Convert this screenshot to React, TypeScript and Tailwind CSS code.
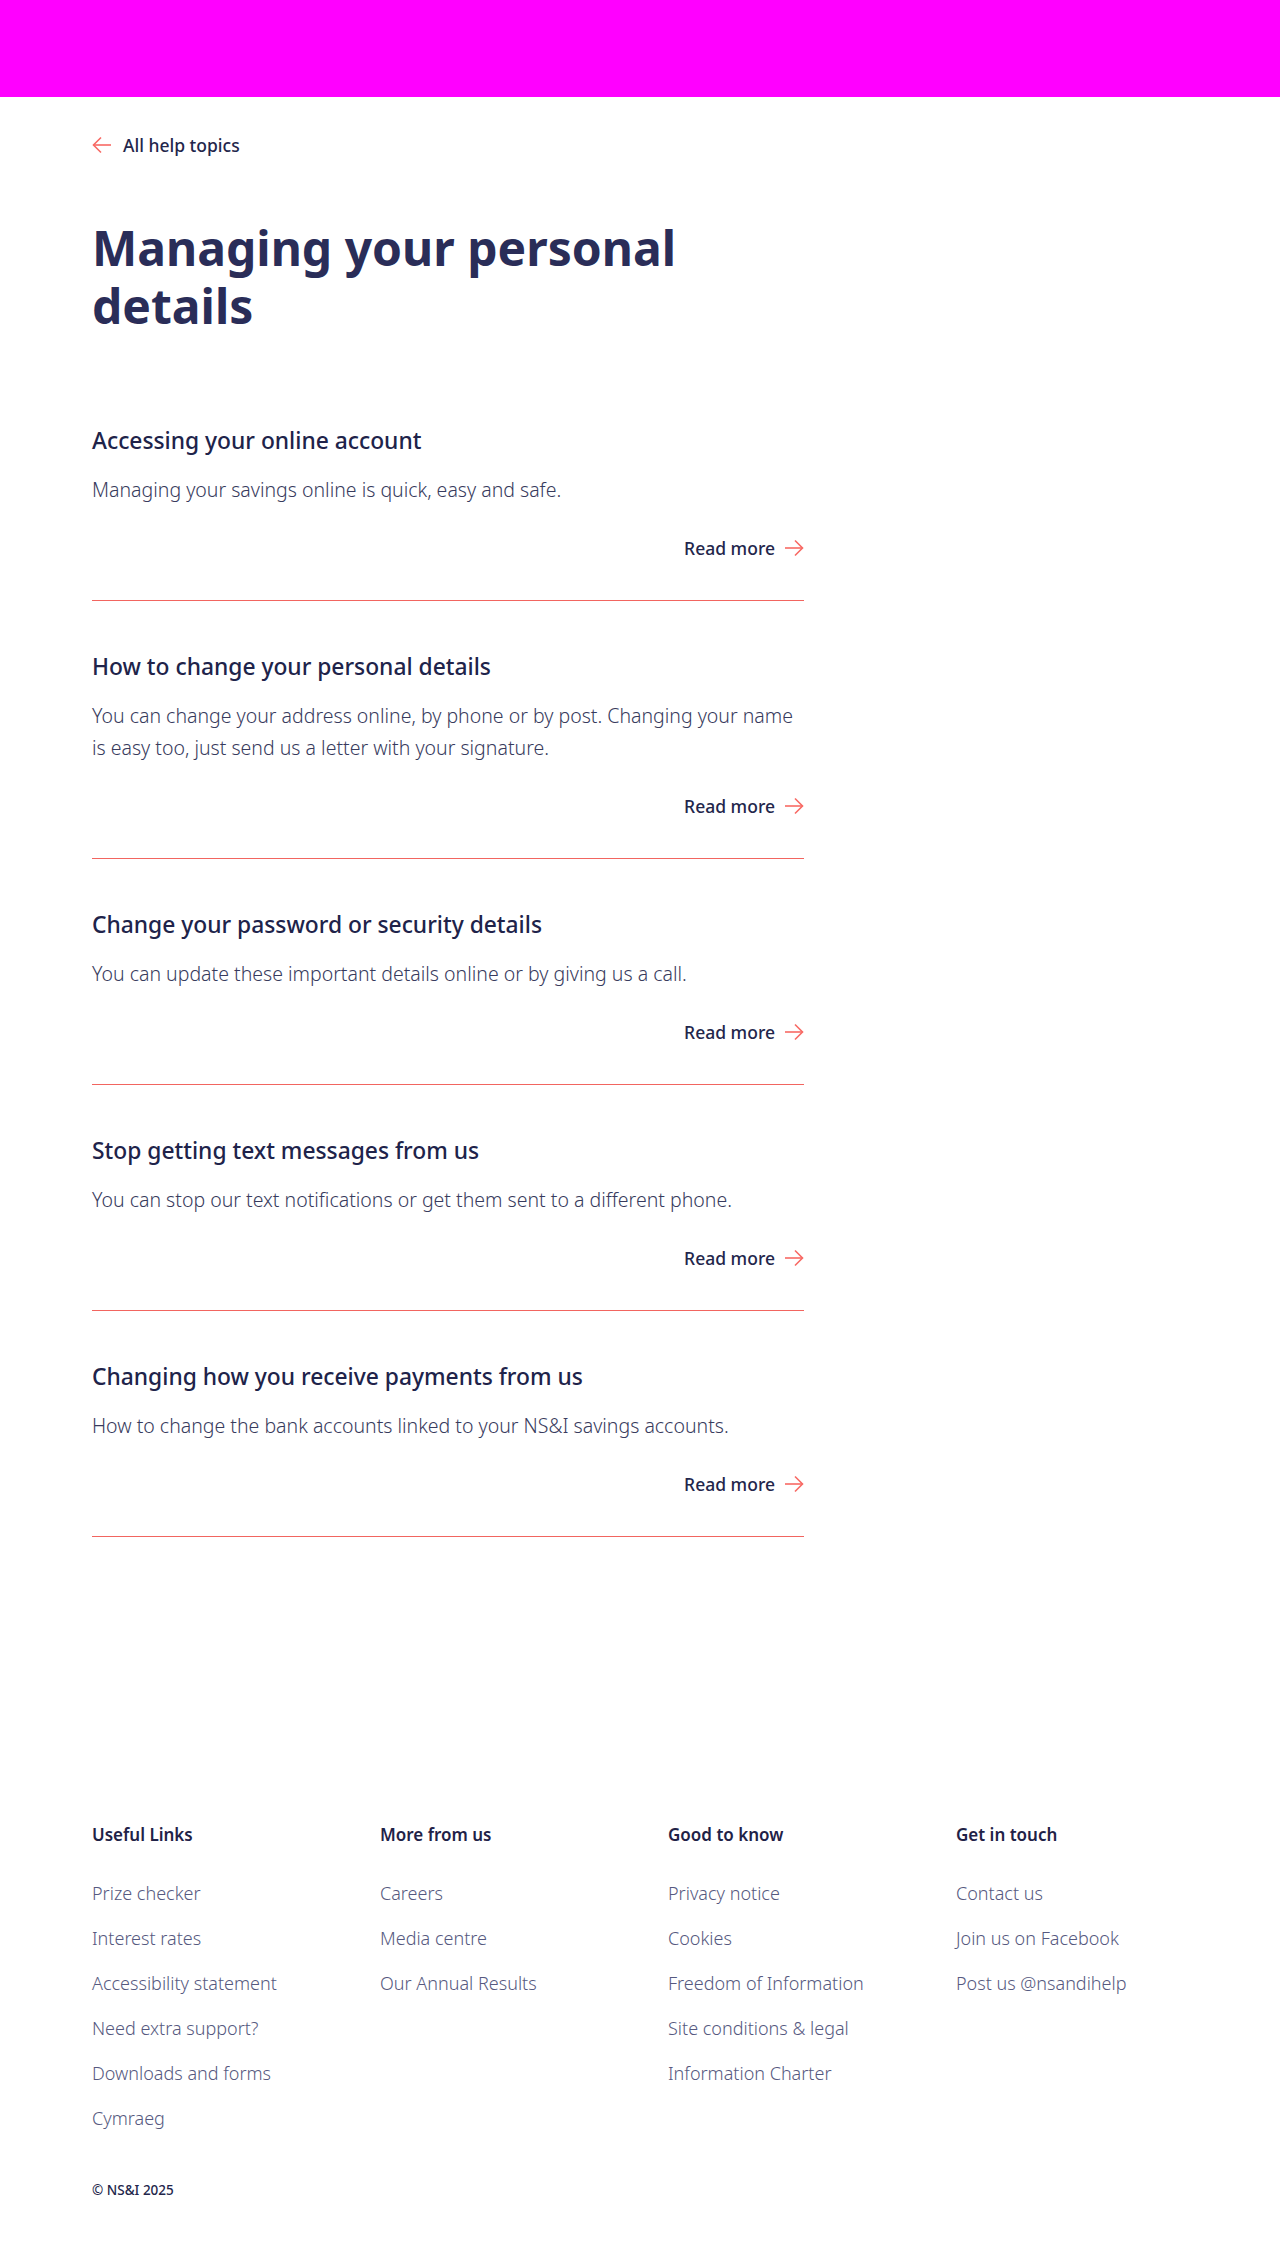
import { memo } from "react";

const ARTICLES: { title: string; body: string }[] = [
  { title: "Accessing your online account", body: "Managing your savings online is quick, easy and safe." },
  {
    title: "How to change your personal details",
    body: "You can change your address online, by phone or by post. Changing your name is easy too, just send us a letter with your signature.",
  },
  { title: "Change your password or security details", body: "You can update these important details online or by giving us a call." },
  { title: "Stop getting text messages from us", body: "You can stop our text notifications or get them sent to a different phone." },
  { title: "Changing how you receive payments from us", body: "How to change the bank accounts linked to your NS&I savings accounts." },
];

const FOOTER: { heading: string; links: string[] }[] = [
  {
    heading: "Useful Links",
    links: ["Prize checker", "Interest rates", "Accessibility statement", "Need extra support?", "Downloads and forms", "Cymraeg"],
  },
  { heading: "More from us", links: ["Careers", "Media centre", "Our Annual Results"] },
  {
    heading: "Good to know",
    links: ["Privacy notice", "Cookies", "Freedom of Information", "Site conditions & legal", "Information Charter"],
  },
  { heading: "Get in touch", links: ["Contact us", "Join us on Facebook", "Post us @nsandihelp"] },
];

function Arrow({ dir }: { dir: "left" | "right" }) {
  return (
    <svg width="20" height="18" viewBox="0 0 20 18" fill="none" stroke="#f86a64" strokeWidth="1.6" className="shrink-0">
      {dir === "right" ? (
        <>
          <line x1="1" y1="9" x2="18.5" y2="9" />
          <polyline points="11,1.5 18.5,9 11,16.5" />
        </>
      ) : (
        <>
          <line x1="1.5" y1="9" x2="19" y2="9" />
          <polyline points="9,1.5 1.5,9 9,16.5" />
        </>
      )}
    </svg>
  );
}

function App() {
  return (
    <div className="min-h-[2268px] bg-white font-['Noto_Sans','Lato',sans-serif] text-[#262950]">
      {/* Brand bar */}
      <div className="h-[97px] bg-[#ff00ff]" />

      <main className="pl-[92px]">
        {/* Back link */}
        <a className="mt-[36px] flex items-center gap-[11px] text-[17.5px] font-medium leading-[24px] text-[#23264b]">
          <Arrow dir="left" />
          All help topics
        </a>

        <h1 className="mt-[62px] w-[640px] text-[48px] font-bold leading-[57.6px] text-[#2a2d58]">
          Managing your personal details
        </h1>

        {/* Articles */}
        <div className="mt-[41px] w-[712px]">
          {ARTICLES.map((a) => (
            <div key={a.title} className="border-b border-[#f26560] pb-[40px] pt-[51px]">
              <h2 className="text-[22.8px] font-medium leading-[30px] text-[#20234a]">{a.title}</h2>
              <p className="mt-[18px] text-[19.5px] font-light leading-[32px] text-[#383b5d]">{a.body}</p>
              <div className="mt-[30px] flex justify-end">
                <a className="flex items-center gap-[9px] text-[17.5px] font-medium leading-[24px] text-[#23264b]">
                  Read more
                  <Arrow dir="right" />
                </a>
              </div>
            </div>
          ))}
        </div>
      </main>

      {/* Footer */}
      <footer className="mt-[286px] pb-[70px] pl-[92px]">
        <div className="grid w-[1152px] grid-cols-4">
          {FOOTER.map((col) => (
            <div key={col.heading}>
              <p className="text-[17px] font-semibold leading-[24px] text-[#1f2247]">{col.heading}</p>
              <ul className="mt-[34px] flex flex-col gap-[21px]">
                {col.links.map((l) => (
                  <li key={l} className="text-[18px] font-light leading-[24px] text-[#565980]">
                    {l}
                  </li>
                ))}
              </ul>
            </div>
          ))}
        </div>
        <p className="mt-[50px] text-[13.5px] font-medium leading-[20px] text-[#23264b]">© NS&amp;I 2025</p>
      </footer>
    </div>
  );
}

export default memo(App);
